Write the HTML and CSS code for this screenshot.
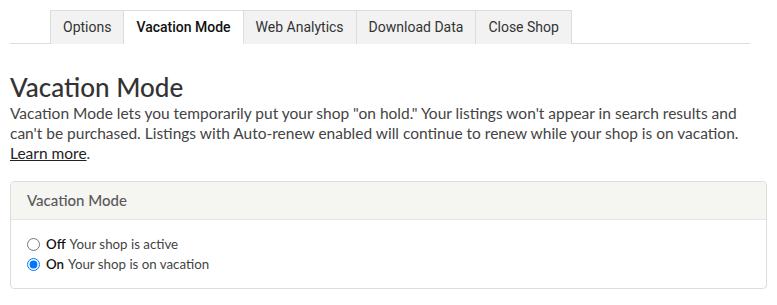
FILE: index.html
```html
<!DOCTYPE html>
<html>
<head>
<meta charset="UTF-8">
<title>Shop Settings &ndash; Vacation Mode</title>
<link rel="stylesheet" href="styles.css">
</head>
<body>

<div id="page">
	<ul class="tabs">
		<li><a href="#">Options</a></li>
		<li class="active"><a href="#">Vacation Mode</a></li>
		<li><a href="#">Web Analytics</a></li>
		<li><a href="#">Download Data</a></li>
		<li><a href="#">Close Shop</a></li>
	</ul>

	<h1>Vacation Mode</h1>
	<p class="intro">
		Vacation Mode lets you temporarily put your shop "on hold." Your listings won't appear in search results and
		can't be purchased. Listings with Auto-renew enabled will continue to renew while your shop is on vacation.
		<a href="#">Learn more</a>.
	</p>

	<div class="panel">
		<div class="panel-head">Vacation Mode</div>
		<div class="panel-body">
			<label class="choice"><input type="radio" name="vacation"> <b>Off</b> Your shop is active</label>
			<label class="choice"><input type="radio" name="vacation" checked> <b>On</b> Your shop is on vacation</label>
		</div>
	</div>
</div>

</body>
</html>
```

FILE: styles.css
```css
html, body {
	background: #FFF;
	margin: 0;
	padding: 0;
}
body {
	color: #222;
	font-family: Lato, "Noto Sans", sans-serif;
}
#page {
	padding: 10px 10px 0;
}
/* Tab strip sits on a thin grey rule */
.tabs {
	border-bottom: 1px solid #DDD;
	display: flex;
	list-style: none;
	margin: 0 17px 0 0;
	padding: 0 0 0 40px;
}
.tabs li {
	background: #F2F2F2;
	border: 1px solid #DDD;
	border-bottom: none;
	border-left: none;
	margin-bottom: -1px;
}
.tabs li:first-child {
	border-left: 1px solid #DDD;
}
.tabs a {
	color: #333;
	display: block;
	font-family: Roboto, Arial, sans-serif;
	font-size: 14px;
	height: 32px;
	line-height: 32px;
	padding: 0 12px;
	text-decoration: none;
}
.tabs li.active {
	background: #FFF;
	border-bottom: 1px solid #FFF;
}
.tabs li.active a {
	color: #111;
	font-weight: 500;
}
h1 {
	color: #333;
	font-size: 26px;
	font-weight: 500;
	line-height: 30px;
	margin: 28px 0 1px;
}
.intro {
	color: #444;
	font-size: 15.5px;
	line-height: 20px;
	margin: 0 0 18px;
}
.intro a {
	color: #222;
}
.panel {
	border: 1px solid #DDD;
	border-radius: 4px;
}
.panel-head {
	background: #F5F5F1;
	border-bottom: 1px solid #E6E6E3;
	border-radius: 4px 4px 0 0;
	color: #595959;
	font-size: 15px;
	font-weight: 500;
	height: 37px;
	line-height: 37px;
	padding: 0 16px;
}
.panel-body {
	padding: 14px 16px 14px;
}
.choice {
	align-items: center;
	color: #444;
	display: flex;
	font-size: 13.3px;
	gap: 4px;
	line-height: 20px;
}
.choice input {
	margin: 0 2px 0 0;
}
.choice b {
	color: #111;
	font-weight: 600;
}
```
